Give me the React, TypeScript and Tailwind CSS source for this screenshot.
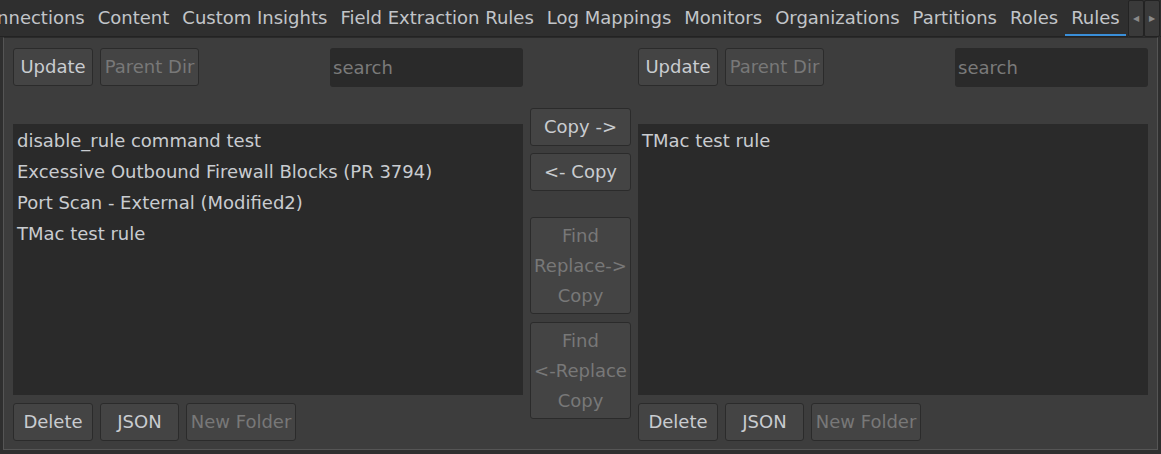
import { ReactNode } from 'react';

const tabs = [
    'Connections',
    'Content',
    'Custom Insights',
    'Field Extraction Rules',
    'Log Mappings',
    'Monitors',
    'Organizations',
    'Partitions',
    'Roles',
    'Rules',
];

function Btn({ children, disabled, className = '' }: { children: ReactNode; disabled?: boolean; className?: string }) {
    return (
        <button
            className={`h-[38px] rounded-[3px] border border-[#2b2b2b] bg-[#444444] text-[18px] leading-[30px] ${disabled ? 'text-[#787878]' : 'text-[#c9ccd0]'} ${className}`}
        >
            {children}
        </button>
    );
}

function Side({ items }: { items: string[] }) {
    return (
        <div className="flex w-[510px] flex-col">
            <div className="flex h-[38px] items-center">
                <Btn className="w-[80px]">Update</Btn>
                <Btn disabled className="ml-[7px] w-[99px]">Parent Dir</Btn>
                <div className="ml-auto flex h-[39px] w-[193px] items-center rounded-[3px] bg-[#2a2a2a] px-[3px] text-[18px] text-[#7a7a7a]">
                    search
                </div>
            </div>
            <div className="mt-[38px] h-[271px] bg-[#2a2a2a] pt-[1px]">
                {items.map((item) => (
                    <div key={item} className="h-[31px] px-[4px] text-[18px] leading-[31px] text-[#c9ccd0]">
                        {item}
                    </div>
                ))}
            </div>
            <div className="mt-[8px] flex">
                <Btn className="w-[80px]">Delete</Btn>
                <Btn className="ml-[7px] w-[79px]">JSON</Btn>
                <Btn disabled className="ml-[7px] w-[110px]">New Folder</Btn>
            </div>
        </div>
    );
}

export default function App() {
    return (
        <div className="h-[454px] w-[1161px] overflow-hidden bg-[#2f2f2f] font-['DejaVu_Sans',sans-serif]">
            <div className="relative flex h-[37px] border-b border-[#232323] bg-[#2f2f2f]">
                <div className="flex h-[36px] -ml-[33px] overflow-hidden">
                    {tabs.map((tab) => (
                        <div
                            key={tab}
                            className={`relative shrink-0 px-[6.5px] text-[18px] leading-[36px] text-[#c2c5c9] ${tab === 'Rules' ? 'border-b-2 border-[#3a8fd9]' : ''}`}
                        >
                            {tab}
                        </div>
                    ))}
                </div>
                <div className="absolute right-[1px] top-0 flex h-[37px] bg-[#2f2f2f]">
                    <div className="flex w-[16px] items-center justify-center rounded-[2px] border border-[#232323] bg-[#3a3a3a] text-[8px] text-[#8a8a8a]">◀</div>
                    <div className="flex w-[16px] items-center justify-center rounded-[2px] border border-[#232323] bg-[#3a3a3a] text-[8px] text-[#8a8a8a]">▶</div>
                </div>
            </div>
            <div className="mx-[3px] h-[413px] border border-[#555555] border-t-[#2a2a2a] bg-[#3d3d3d] px-[9px] pt-[10px]">
                <div className="flex">
                    <Side
                        items={[
                            'disable_rule command test',
                            'Excessive Outbound Firewall Blocks (PR 3794)',
                            'Port Scan - External (Modified2)',
                            'TMac test rule',
                        ]}
                    />
                    <div className="mx-[7px] mt-[60px] flex w-[101px] flex-col">
                        <Btn className="w-full">Copy -&gt;</Btn>
                        <Btn className="mt-[7px] w-full">&lt;- Copy</Btn>
                        <Btn disabled className="mt-[26px] h-[97px] w-full leading-[30px]">
                            Find<br />Replace-&gt;<br />Copy
                        </Btn>
                        <Btn disabled className="mt-[8px] h-[97px] w-full leading-[30px]">
                            Find<br />&lt;-Replace<br />Copy
                        </Btn>
                    </div>
                    <Side items={['TMac test rule']} />
                </div>
            </div>
        </div>
    );
}
